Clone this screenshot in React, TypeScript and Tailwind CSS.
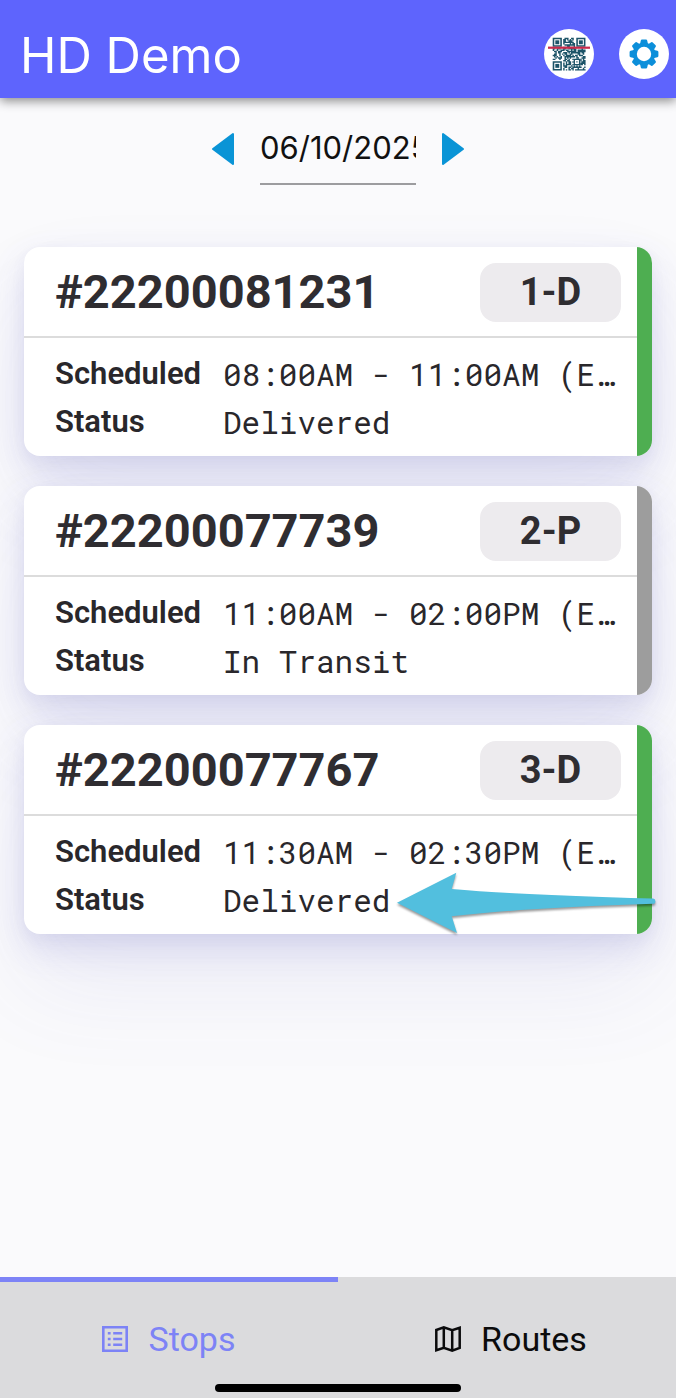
import React from "react";

type Stop = {
  id: string;
  badge: string;
  scheduled: string;
  status: string;
  delivered: boolean;
  highlighted?: boolean;
};

const stops: Stop[] = [
  { id: "#22200081231", badge: "1-D", scheduled: "08:00AM - 11:00AM (E…", status: "Delivered", delivered: true },
  { id: "#22200077739", badge: "2-P", scheduled: "11:00AM - 02:00PM (E…", status: "In Transit", delivered: false },
  { id: "#22200077767", badge: "3-D", scheduled: "11:30AM - 02:30PM (E…", status: "Delivered", delivered: true, highlighted: true },
];

const QR_SIZE = 25;

function qrPath(): string {
  let d = "";
  let seed = 41;
  for (let y = 0; y < QR_SIZE; y++) {
    for (let x = 0; x < QR_SIZE; x++) {
      seed = (seed * 1103515245 + 12345) % 2147483648;
      const inFinder = (x < 8 && y < 8) || (x > 16 && y < 8) || (x < 8 && y > 16);
      const inAlign = x > 15 && x < 21 && y > 15 && y < 21;
      if (!inFinder && !inAlign && seed / 2147483648 > 0.42) d += `M${x} ${y}h1.1v1.1h-1.1z`;
    }
  }
  return d;
}

function QrIcon() {
  return (
    <svg viewBox="0 0 50 50" className="size-full" aria-hidden="true">
      <g transform="translate(8.7 8.7) scale(1.31)" fill="#1d5468">
        <path d={qrPath()} />
        {[[0, 0], [18, 0], [0, 18]].map(([x, y]) => (
          <g key={`${x}-${y}`} transform={`translate(${x} ${y})`}>
            <path fillRule="evenodd" d="M0 0h7v7H0zM1.2 1.2v4.6h4.6V1.2z" />
            <path d="M2 2h3v3H2z" />
          </g>
        ))}
        <path fillRule="evenodd" d="M16 16h5v5h-5zM17 17v3h3v-3z" />
        <path d="M18 18h1v1h-1z" />
      </g>
      <rect x="4" y="17.6" width="42" height="2.2" fill="#c92a4b" />
    </svg>
  );
}

function GearIcon() {
  return (
    <svg viewBox="-25 -25 50 50" className="size-full" aria-hidden="true">
      <g fill="#0c8fda">
        {[0, 45, 90, 135, 180, 225, 270, 315].map((a) => (
          <path key={a} transform={`rotate(${a})`} d="M-4.2 -9L-3.2 -13.4Q-3 -14.4 -2 -14.4H2Q3 -14.4 3.2 -13.4L4.2 -9z" />
        ))}
        <circle r="11.2" />
      </g>
      <circle r="7.2" fill="#fff" />
    </svg>
  );
}

function ListIcon() {
  return (
    <svg viewBox="0 0 26 26" className="size-[26px]" fill="currentColor" aria-hidden="true">
      <path fillRule="evenodd" d="M0 0h26v26H0zM2.6 2.6v20.8h20.8V2.6z" />
      <path d="M5.8 6h2.8v2.6H5.8zM5.8 11.7h2.8v2.6H5.8zM5.8 17.4h2.8V20H5.8zM11.2 6h9v2.6h-9zM11.2 11.7h9v2.6h-9zM11.2 17.4h9V20h-9z" />
    </svg>
  );
}

function MapIcon() {
  return (
    <svg viewBox="0 0 26 26" className="size-[26px]" fill="none" stroke="currentColor" strokeWidth="2.5" aria-hidden="true">
      <path d="M1.3 4L8.8 1.4L17.2 4.2L24.7 1.8V21.8L17.2 24.6L8.8 21.8L1.3 24.2zM8.8 1.4V21.8M17.2 4.2V24.6" />
    </svg>
  );
}

function Arrow() {
  return (
    <svg
      viewBox="390 868 270 72"
      className="pointer-events-none absolute -right-2 -bottom-1.5 h-[72px] w-[270px] drop-shadow-[0_2px_1px_rgba(0,0,0,0.4)]"
      aria-hidden="true"
    >
      <path
        fill="#52bfde"
        d="M397 902.7L456.3 872.7L451.7 889Q510 894.5 653 898.6Q655.4 898.8 655.4 901.2Q655.4 903.8 653 903.8Q530 907.5 451.7 916.3L457 933z"
      />
    </svg>
  );
}

function StopCard({ stop }: { stop: Stop }) {
  return (
    <li className="relative rounded-2xl bg-white shadow-[0_50px_100px_rgba(85,85,190,0.09),0_15px_35px_rgba(80,80,190,0.15),0_5px_15px_rgba(80,80,150,0.05)]">
      <article className="flex overflow-hidden rounded-2xl">
        <div className="min-w-0 flex-1">
          <header className="flex h-[91px] items-center justify-between border-b-2 border-[#dcdcdc] pt-0.5 pr-4 pl-[31px]">
            <h2 className="text-[47px] font-bold text-[#2f2d31]">{stop.id}</h2>
            <span className="flex h-[59px] w-[141px] items-center justify-center rounded-2xl bg-[#edebee] text-[38px] font-bold text-[#2f2d31]">
              {stop.badge}
            </span>
          </header>
          <dl className="grid auto-rows-[48px] grid-cols-[168px_minmax(0,1fr)] pt-3 pb-2.5 pl-[31px] text-[#29272b]">
            <dt className="text-[31px] leading-[48px] font-semibold">Scheduled</dt>
            <dd className="truncate font-['Roboto_Mono','Liberation_Mono',monospace] text-[31px] leading-[48px]">{stop.scheduled}</dd>
            <dt className="text-[31px] leading-[48px] font-semibold">Status</dt>
            <dd className="truncate font-['Roboto_Mono','Liberation_Mono',monospace] text-[31px] leading-[48px]">{stop.status}</dd>
          </dl>
        </div>
        <div className={stop.delivered ? "w-[15px] bg-[#4eae51]" : "w-[15px] bg-[#9d9d9d]"} />
      </article>
      {stop.highlighted && <Arrow />}
    </li>
  );
}

export default function App() {
  return (
    <div className="flex min-h-screen flex-col bg-[#fafafc] font-['Roboto',sans-serif]">
      <header className="flex h-[98px] items-center justify-between bg-[#5e64fd] pt-2.5 pr-[7px] pl-5 shadow-[0_3px_10px_rgba(0,0,0,0.45)]">
        <h1 className="pt-1 font-['Inter',sans-serif] text-[49px] text-white">HD Demo</h1>
        <div className="flex gap-[25px]">
          <button type="button" aria-label="Scan code" className="size-[50px] rounded-full bg-white">
            <QrIcon />
          </button>
          <button type="button" aria-label="Settings" className="size-[50px] rounded-full bg-white">
            <GearIcon />
          </button>
        </div>
      </header>

      <main className="flex-1 px-6">
        <div className="flex items-start justify-center gap-[25px] pt-[14px]">
          <button type="button" aria-label="Previous day" className="mt-5">
            <svg viewBox="0 0 23 34" className="h-[34px] w-[23px]" aria-hidden="true">
              <path d="M1 17L21 2V32z" fill="#0a94d6" stroke="#0a94d6" strokeWidth="2" strokeLinejoin="round" />
            </svg>
          </button>
          <input
            type="text"
            aria-label="Date"
            defaultValue="06/10/2025"
            className="h-[73px] w-[156px] border-b-2 border-[#9c9c9f] bg-transparent font-['Inter',sans-serif] text-[31px] text-[#111] outline-none"
          />
          <button type="button" aria-label="Next day" className="mt-5">
            <svg viewBox="0 0 23 34" className="h-[34px] w-[23px]" aria-hidden="true">
              <path d="M22 17L2 2V32z" fill="#0a94d6" stroke="#0a94d6" strokeWidth="2" strokeLinejoin="round" />
            </svg>
          </button>
        </div>

        <ul className="mt-[62px] flex flex-col gap-[30px]">
          {stops.map((stop) => (
            <StopCard key={stop.id} stop={stop} />
          ))}
        </ul>
      </main>

      <nav className="bg-[#dbdbdd]">
        <div className="grid h-[107px] grid-cols-2 text-[34px]">
          <a href="#stops" aria-current="page" className="flex items-center justify-center gap-5 border-t-[5px] border-[#7d83f6] pt-3 text-[#7d83f6]">
            <ListIcon />
            Stops
          </a>
          <a href="#routes" className="flex items-center justify-center gap-5 border-t-[5px] border-transparent pt-3 pl-2 text-[#0b0b0c]">
            <MapIcon />
            Routes
          </a>
        </div>
        <div className="mx-auto mb-1.5 h-2 w-[246px] rounded-full bg-black" />
      </nav>
    </div>
  );
}
